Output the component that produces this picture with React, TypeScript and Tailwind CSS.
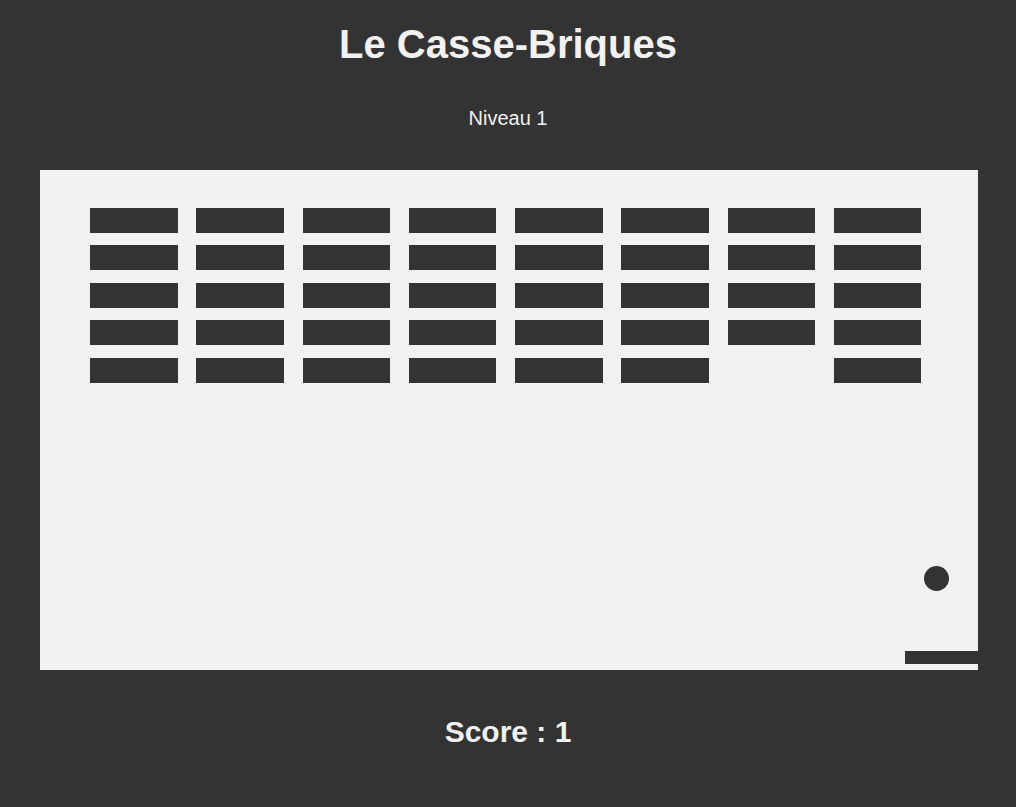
import React from "react";

const ROWS = 5;
const COLS = 8;

// bricks that are already broken: [row, col]
const broken = new Set(["4-6"]);

export default function App() {
  const bricks: { key: string; alive: boolean }[] = [];
  for (let r = 0; r < ROWS; r++) {
    for (let c = 0; c < COLS; c++) {
      bricks.push({ key: `${r}-${c}`, alive: !broken.has(`${r}-${c}`) });
    }
  }

  return (
    <div
      className="min-h-screen w-full bg-[#333333] text-[#f1f1f1] flex flex-col items-center"
      style={{ fontFamily: '"Liberation Sans", Arial, sans-serif' }}
    >
      <h1 className="mt-[21px] text-[40px] leading-[46px] font-bold">Le Casse-Briques</h1>

      <p className="mt-10 text-[20px] leading-[23px]">Niveau 1</p>

      {/* Game board */}
      <div className="mt-10 self-start ml-10 w-[938px] h-[500px] bg-[#f1f1f1] relative overflow-hidden">
        <div className="grid grid-cols-[repeat(8,87.5px)] auto-rows-[25px] gap-x-[18.75px] gap-y-[12.5px] pl-[50px] pt-[37.5px]">
          {bricks.map((b) => (
            <div key={b.key} className={b.alive ? "bg-[#333333]" : ""} />
          ))}
        </div>

        {/* ball */}
        <div className="absolute left-[884px] top-[396px] w-[25px] h-[25px] rounded-full bg-[#333333]" />

        {/* paddle */}
        <div className="absolute left-[865px] top-[481px] w-[100px] h-[12.5px] bg-[#333333]" />
      </div>

      <h2 className="mt-[45px] text-[30px] leading-[34px] font-bold">Score : 1</h2>
    </div>
  );
}
